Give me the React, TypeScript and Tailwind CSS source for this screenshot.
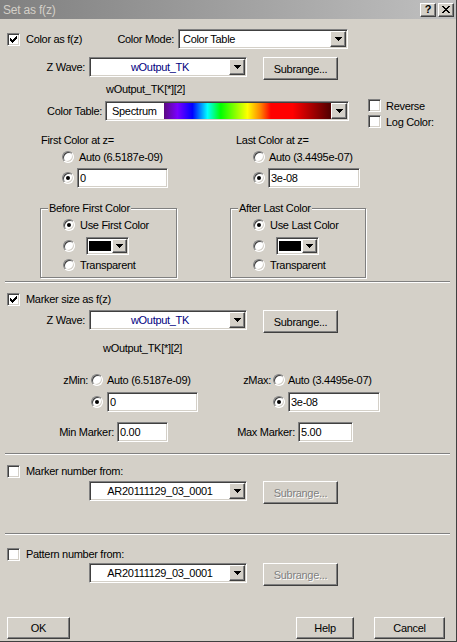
import React from "react";

const SUNKEN =
  "border border-t-[#808080] border-l-[#808080] border-b-white border-r-white shadow-[inset_1px_1px_0_#404040,inset_-1px_-1px_0_#d4d0c8]";
const RAISED =
  "border border-t-white border-l-white border-b-[#404040] border-r-[#404040] shadow-[inset_-1px_-1px_0_#808080,inset_1px_1px_0_#d4d0c8]";

function Check({ checked }: { checked?: boolean }) {
  return (
    <div className={`w-[13px] h-[13px] bg-white shrink-0 flex items-center justify-center ${SUNKEN}`}>
      {checked && (
        <svg width="7" height="7" viewBox="0 0 7 7" shapeRendering="crispEdges">
          <path d="M6 0h1v1h-1zM5 1h2v1h-2zM0 2h1v1h-1zM4 2h3v1h-3zM0 3h2v1h-2zM3 3h3v1h-3zM0 4h5v1h-5zM1 5h3v1h-3zM2 6h1v1h-1z" fill="#000" />
        </svg>
      )}
    </div>
  );
}

function Radio({ checked, className = "" }: { checked?: boolean; className?: string }) {
  return (
    <div
      className={`w-[12px] h-[12px] rounded-full bg-white shrink-0 flex items-center justify-center border border-t-[#808080] border-l-[#808080] border-b-white border-r-white shadow-[inset_1px_1px_0_#404040,inset_-1px_-1px_0_#d4d0c8] ${className}`}
    >
      {checked && <div className="w-[4px] h-[4px] rounded-full bg-black" />}
    </div>
  );
}

function ArrowBtn({ className = "w-[16px]" }: { className?: string }) {
  return (
    <div className={`self-stretch bg-[#d4d0c8] flex items-center justify-center shrink-0 ${RAISED} ${className}`}>
      <svg width="7" height="4" viewBox="0 0 7 4" shapeRendering="crispEdges">
        <path d="M0 0h7v1h-7zM1 1h5v1h-5zM2 2h3v1h-3zM3 3h1v1h-1z" fill="#000" />
      </svg>
    </div>
  );
}

function Combo({ className, children }: { className: string; children: React.ReactNode }) {
  return (
    <div className={`h-[20px] bg-white flex p-[1px] shrink-0 ${SUNKEN} ${className}`}>
      <div className="flex-1 flex items-center overflow-hidden whitespace-nowrap">{children}</div>
      <ArrowBtn />
    </div>
  );
}

function Field({ className, children }: { className: string; children: React.ReactNode }) {
  return (
    <div className={`h-[20px] bg-white flex items-center pl-[2px] shrink-0 ${SUNKEN} ${className}`}>{children}</div>
  );
}

function Btn({
  className,
  children,
  disabled,
}: {
  className: string;
  children: React.ReactNode;
  disabled?: boolean;
}) {
  return (
    <div className={`flex items-center justify-center bg-[#d4d0c8] shrink-0 ${RAISED} ${className}`}>
      <span className={disabled ? "text-[#808080] [text-shadow:1px_1px_0_#ffffff]" : ""}>{children}</span>
    </div>
  );
}

function Picker({ className }: { className: string }) {
  return (
    <div className={`w-[43px] h-[18px] bg-white flex p-[1px] shrink-0 ${SUNKEN} ${className}`}>
      <div className="flex-1 flex items-center justify-center">
        <div className="w-[22px] h-[10px] bg-black" />
      </div>
      <ArrowBtn className="w-[15px]" />
    </div>
  );
}

function Group({ title, first, className }: { title: string; first: string; className: string }) {
  return (
    <div
      className={`relative h-[70px] border border-[#808080] shadow-[1px_1px_0_#ffffff,inset_1px_1px_0_#ffffff] flex flex-col pl-[22px] shrink-0 ${className}`}
    >
      <span className="absolute left-[7px] -top-[8px] px-[1px] bg-[#d4d0c8] whitespace-nowrap">{title}</span>
      <div className="mt-[9px] h-[14px] flex items-center">
        <Radio checked />
        <span className="ml-[5px] whitespace-nowrap">{first}</span>
      </div>
      <div className="mt-[5px] h-[18px] flex items-center">
        <Radio />
        <Picker className="ml-[11px]" />
      </div>
      <div className="mt-[3px] h-[14px] flex items-center">
        <Radio />
        <span className="ml-[5px]">Transparent</span>
      </div>
    </div>
  );
}

function Sep({ className }: { className: string }) {
  return (
    <div className={`ml-[5px] mr-[6px] h-[2px] border-t border-b border-t-[#808080] border-b-white shrink-0 ${className}`} />
  );
}

function TitleBtn({ children }: { children: React.ReactNode }) {
  return (
    <div className={`w-[16px] h-[14px] bg-[#d4d0c8] flex items-center justify-center shrink-0 ${RAISED}`}>
      {children}
    </div>
  );
}

export default function App() {
  return (
    <div className="w-[457px] h-[642px] bg-[#d4d0c8] flex flex-col font-['Liberation_Sans',Arial,sans-serif] text-[11px] leading-[14px] text-black tracking-[-0.3px] border-r border-b border-r-[#404040] border-b-[#404040] overflow-hidden">
      {/* Title bar */}
      <div className="h-[19px] shrink-0 flex items-center bg-linear-to-r from-[#808080] to-[#c0c0c0] pl-[3px] pr-[2px]">
        <span className="flex-1 text-[12px] text-[#d4d0c8] tracking-[-0.2px]">Set as f(z)</span>
        <TitleBtn>
          <span className="font-bold text-[11px] leading-none tracking-normal">?</span>
        </TitleBtn>
        <div className="w-[2px]" />
        <TitleBtn>
          <svg width="8" height="7" viewBox="0 0 8 7" shapeRendering="crispEdges">
            <path
              d="M0 0h2v1h-2zM6 0h2v1h-2zM1 1h2v1h-2zM5 1h2v1h-2zM2 2h4v1h-4zM3 3h2v1h-2zM2 4h4v1h-4zM1 5h2v1h-2zM5 5h2v1h-2zM0 6h2v1h-2zM6 6h2v1h-2z"
              fill="#000"
            />
          </svg>
        </TitleBtn>
      </div>

      {/* Color as f(z) */}
      <div className="mt-[10px] h-[20px] flex items-center shrink-0">
        <div className="w-[117px] pl-[7px] flex items-center">
          <Check checked />
          <span className="ml-[6px] whitespace-nowrap">Color as f(z)</span>
        </div>
        <div className="w-[61px] pr-[4px] text-right whitespace-nowrap">Color Mode:</div>
        <Combo className="w-[170px]">
          <span className="pl-[3px]">Color Table</span>
        </Combo>
      </div>

      <div className="mt-[8px] h-[23px] flex items-start shrink-0">
        <div className="w-[85px] h-[20px] flex items-center justify-end whitespace-nowrap">Z Wave:</div>
        <Combo className="ml-[4px] w-[158px]">
          <span className="flex-1 text-center text-[#000080]">wOutput_TK</span>
        </Combo>
        <Btn className="ml-[16px] w-[75px] h-[23px]">Subrange...</Btn>
      </div>

      <div className="mt-[2px] h-[14px] pl-[106px] shrink-0">wOutput_TK[*][2]</div>

      <div className="h-[34px] flex items-start shrink-0">
        <div className="mt-[5px] w-[102px] h-[20px] flex items-center justify-end whitespace-nowrap">Color Table:</div>
        <div className={`mt-[5px] ml-[3px] w-[244px] h-[20px] flex p-[1px] bg-white shrink-0 ${SUNKEN}`}>
          <div className="w-[57px] flex items-center pl-[5px]">Spectrum</div>
          <div className="flex-1 bg-[linear-gradient(to_right,#5c0a80_0%,#7a00ff_8%,#0000ff_17%,#00ffff_26%,#00ff00_34%,#80ff00_42%,#ffff00_50%,#ff8000_58%,#ff0000_64%,#ff0000_77%,#500000_100%)]" />
          <ArrowBtn />
        </div>
        <div className="ml-[19px] mt-[3px] flex flex-col gap-[3px]">
          <div className="flex items-center h-[13px]">
            <Check />
            <span className="ml-[5px] whitespace-nowrap">Reverse</span>
          </div>
          <div className="flex items-center h-[13px]">
            <Check />
            <span className="ml-[5px] whitespace-nowrap">Log Color:</span>
          </div>
        </div>
      </div>

      <div className="mt-[3px] h-[14px] flex shrink-0">
        <div className="w-[236px] pl-[41px]">First Color at z=</div>
        <div>Last Color at z=</div>
      </div>

      <div className="mt-[3px] h-[14px] flex items-center shrink-0">
        <div className="w-[253px] pl-[62px] flex items-center">
          <Radio />
          <span className="ml-[5px]">Auto (6.5187e-09)</span>
        </div>
        <div className="flex items-center">
          <Radio />
          <span className="ml-[4px]">Auto (3.4495e-07)</span>
        </div>
      </div>

      <div className="mt-[4px] h-[20px] flex items-center shrink-0">
        <div className="w-[253px] pl-[62px] flex items-center">
          <Radio checked />
          <Field className="ml-[3px] w-[91px]">0</Field>
        </div>
        <div className="flex items-center">
          <Radio checked />
          <Field className="ml-[3px] w-[92px]">3e-08</Field>
        </div>
      </div>

      <div className="mt-[20px] h-[70px] flex shrink-0 pl-[40px]">
        <Group title="Before First Color" first="Use First Color" className="w-[137px]" />
        <Group title="After Last Color" first="Use Last Color" className="ml-[53px] w-[136px]" />
      </div>

      <Sep className="mt-[3px]" />

      {/* Marker size */}
      <div className="mt-[9px] h-[14px] pl-[7px] flex items-center shrink-0">
        <Check checked />
        <span className="ml-[6px]">Marker size as f(z)</span>
      </div>

      <div className="mt-[4px] h-[23px] flex items-start shrink-0">
        <div className="w-[85px] h-[20px] flex items-center justify-end whitespace-nowrap">Z Wave:</div>
        <Combo className="ml-[4px] w-[158px]">
          <span className="flex-1 text-center text-[#000080]">wOutput_TK</span>
        </Combo>
        <Btn className="ml-[16px] w-[75px] h-[23px]">Subrange...</Btn>
      </div>

      <div className="mt-[8px] h-[14px] pl-[103px] shrink-0">wOutput_TK[*][2]</div>

      <div className="mt-[18px] h-[14px] flex items-center shrink-0">
        <div className="w-[240px] flex items-center">
          <div className="w-[88px] text-right">zMin:</div>
          <Radio className="ml-[3px]" />
          <span className="ml-[4px]">Auto (6.5187e-09)</span>
        </div>
        <div className="flex items-center">
          <div className="w-[31px] text-right">zMax:</div>
          <Radio className="ml-[2px]" />
          <span className="ml-[3px]">Auto (3.4495e-07)</span>
        </div>
      </div>

      <div className="mt-[5px] h-[20px] flex items-center shrink-0">
        <div className="w-[273px] pl-[91px] flex items-center">
          <Radio checked />
          <Field className="ml-[4px] w-[91px]">0</Field>
        </div>
        <div className="flex items-center">
          <Radio checked />
          <Field className="ml-[3px] w-[92px]">3e-08</Field>
        </div>
      </div>

      <div className="mt-[10px] h-[20px] flex items-center shrink-0">
        <div className="w-[114px] text-right whitespace-nowrap">Min Marker:</div>
        <Field className="ml-[3px] w-[51px]">0.00</Field>
        <div className="w-[127px] text-right whitespace-nowrap">Max Marker:</div>
        <Field className="ml-[3px] w-[55px]">5.00</Field>
      </div>

      <Sep className="mt-[11px]" />

      {/* Marker number */}
      <div className="mt-[9px] h-[14px] pl-[7px] flex items-center shrink-0">
        <Check />
        <span className="ml-[6px]">Marker number from:</span>
      </div>
      <div className="mt-[3px] h-[23px] flex items-start pl-[89px] shrink-0">
        <Combo className="w-[158px]">
          <span className="flex-1 text-center">AR20111129_03_0001</span>
        </Combo>
        <Btn disabled className="ml-[16px] w-[75px] h-[23px]">
          Subrange...
        </Btn>
      </div>

      <Sep className="mt-[29px]" />

      {/* Pattern number */}
      <div className="mt-[12px] h-[14px] pl-[7px] flex items-center shrink-0">
        <Check />
        <span className="ml-[6px]">Pattern number from:</span>
      </div>
      <div className="mt-[2px] h-[23px] flex items-start pl-[89px] shrink-0">
        <Combo className="w-[158px]">
          <span className="flex-1 text-center">AR20111129_03_0001</span>
        </Combo>
        <Btn disabled className="ml-[16px] w-[75px] h-[23px]">
          Subrange...
        </Btn>
      </div>

      {/* Buttons */}
      <div className="mt-[31px] h-[22px] flex shrink-0">
        <Btn className="ml-[7px] w-[63px] h-[22px]">OK</Btn>
        <Btn className="ml-[226px] w-[58px] h-[22px]">Help</Btn>
        <Btn className="ml-[20px] w-[71px] h-[22px]">Cancel</Btn>
      </div>
    </div>
  );
}
